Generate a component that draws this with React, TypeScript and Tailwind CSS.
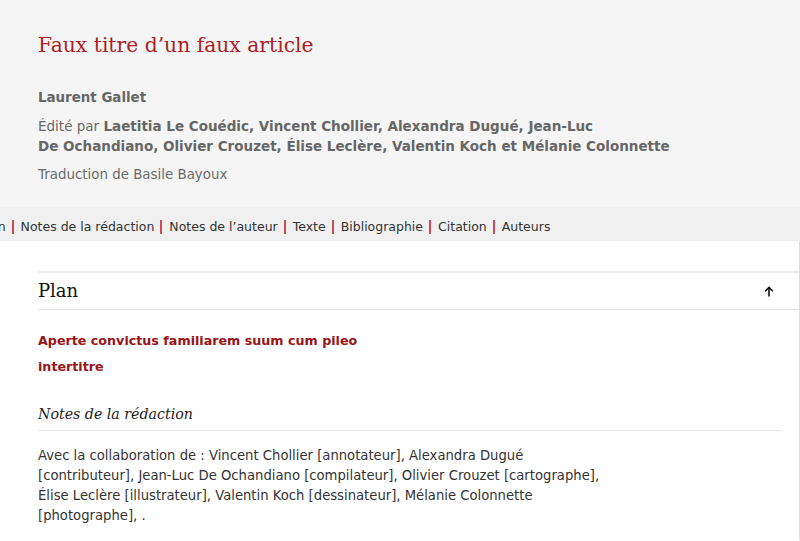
import React from 'react'

const sans = "font-['DejaVu_Sans',Verdana,sans-serif]"
const serif = "font-['DejaVu_Serif',Georgia,serif]"

const navItems = ['Plan', 'Notes de la rédaction', 'Notes de l’auteur', 'Texte', 'Bibliographie', 'Citation', 'Auteurs']

const ArrowUp: React.FC = () => (
  <svg width="10" height="11" viewBox="0 0 10 11" fill="none" stroke="#111" strokeWidth="1.6">
    <path d="M5 10.5V1.5" />
    <path d="M1.2 5.2L5 1.4l3.8 3.8" />
  </svg>
)

export default function App() {
  return (
    <div className={`w-[800px] h-[541px] overflow-hidden bg-white ${sans}`}>
      <header className="bg-[#f5f5f5] pt-[31px] pb-[20px] pl-[38px]">
        <h1 className={`${serif} text-[20.3px] leading-[28px] text-[#ae1c22]`}>Faux titre d’un faux article</h1>
        <p className="mt-[29px] text-[13.4px] leading-[20px] font-bold text-[#666]">Laurent Gallet</p>
        <p className="mt-[8px] w-[640px] text-[13.5px] leading-[20px] text-[#6a6a6a]">
          Édité par{' '}
          <b className="text-[#666]">
            Laetitia Le Couédic, Vincent Chollier, Alexandra Dugué, Jean-Luc De{'\u00a0'}Ochandiano, Olivier Crouzet, Élise Leclère, Valentin Koch et Mélanie Colonnette
          </b>
        </p>
        <p className="mt-[9px] text-[13.4px] leading-[20px] text-[#6a6a6a]">Traduction de Basile Bayoux</p>
      </header>
      <nav className="bg-[#f0f0f0] border-t border-[#fafafa] h-[36px] pt-[7px] flex items-center overflow-hidden text-[12.5px] text-[#333] whitespace-nowrap">
        <div className="flex items-center ml-[-21px]">
          {navItems.map((item, i) => (
            <React.Fragment key={item}>
              {i > 0 && <span className="ml-[6px] mr-[7px] w-[2px] h-[14px] bg-[#cf4a55]" />}
              <span>{item}</span>
            </React.Fragment>
          ))}
        </div>
      </nav>
      <main className="border-r border-[#e0e0e0] h-[299px] pl-[38px] pt-[30px]">
        <section className="border-t-2 border-b border-[#ececec] border-b-[#e2e2e2] h-[39px] flex items-center justify-between pr-[25px]">
          <h2 className={`${serif} text-[18px] text-[#111] -mt-[1px]`}>Plan</h2>
          <ArrowUp />
        </section>
        <ul className="mt-[18px] text-[12.7px] font-bold text-[#9a1316] leading-[26px]">
          <li>Aperte convictus familiarem suum cum pileo</li>
          <li>intertitre</li>
        </ul>
        <h3 className={`${serif} italic text-[14.2px] leading-[24px] text-[#222] mt-[22px] pb-[4px] mr-[17px] border-b border-[#e6e6e6]`}>Notes de la rédaction</h3>
        <p className="mt-[15px] w-[572px] text-[13.2px] leading-[20px] text-[#333]">
          Avec la collaboration de : Vincent Chollier [annotateur], Alexandra Dugué [contributeur], Jean-Luc De Ochandiano [compilateur], Olivier Crouzet [cartographe], Élise Leclère [illustrateur], Valentin Koch [dessinateur], Mélanie Colonnette [photographe], .
        </p>
      </main>
    </div>
  )
}
